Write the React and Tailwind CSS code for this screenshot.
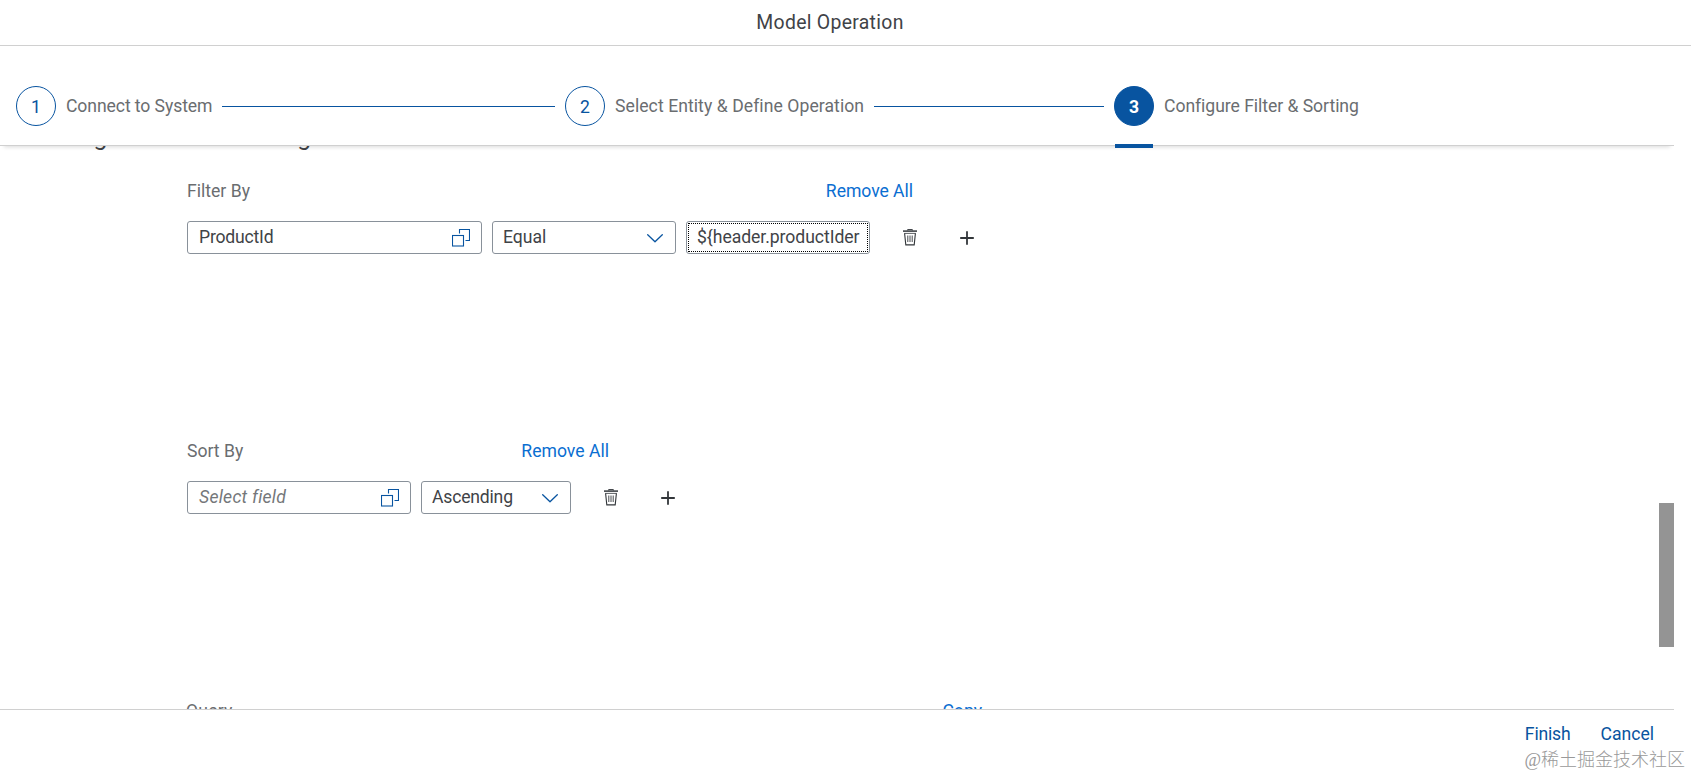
const ValueHelpIcon = () => (
  <svg
    className="h-[18px] w-[18px] flex-shrink-0"
    viewBox="0 0 18 18"
    fill="none"
    stroke="#0854a0"
    strokeWidth="1.1"
  >
    <rect x="0.5" y="6.5" width="11" height="10.5" />
    <path d="M7.5 4.5V0.5H17.5V11.5H13.5" />
  </svg>
);

const ChevronIcon = () => (
  <svg
    className="mt-[2px] h-[9px] w-4 flex-shrink-0"
    viewBox="0 0 16 9"
    fill="none"
    stroke="#0854a0"
    strokeWidth="1.3"
    strokeLinecap="round"
    strokeLinejoin="round"
  >
    <path d="M0.7 0.7L8 7.8L15.3 0.7" />
  </svg>
);

const TrashIcon = () => (
  <svg
    className="h-[17px] w-[14px]"
    viewBox="0 0 14 17"
    fill="none"
    stroke="#32363a"
  >
    <path d="M0 2.1H14" strokeWidth="1.5" />
    <path d="M4.6 1.4V0.6H9.4V1.4" strokeWidth="1" />
    <path d="M1.2 4.4H12.8" strokeWidth="0.8" />
    <path d="M1.6 4.4L2.8 15.9H11.2L12.4 4.4" strokeWidth="1.1" />
    <path d="M4.8 6.5V13M7 6.5V13M9.2 6.5V13" strokeWidth="0.9" />
  </svg>
);

const PlusIcon = () => (
  <svg
    className="h-[14px] w-[14px]"
    viewBox="0 0 14 14"
    fill="none"
    stroke="#32363a"
    strokeWidth="1.8"
  >
    <path d="M7 0.2V13.8M0.2 7H13.8" />
  </svg>
);

const RowActions = () => (
  <>
    <button className="ml-[33px] flex h-[33px] w-[14px] items-center justify-center">
      <TrashIcon />
    </button>
    <button className="ml-[43px] flex h-[33px] w-[14px] items-center justify-center">
      <PlusIcon />
    </button>
  </>
);

const Step = ({ number, active, children }) => (
  <>
    <span
      className={`flex h-10 w-10 flex-shrink-0 items-center justify-center rounded-full border border-[#0854a0] pt-px ${active ? "bg-[#0854a0] font-bold text-white" : "bg-white text-[#0854a0]"}`}
    >
      {number}
    </span>
    <span className="ml-[10px] whitespace-nowrap text-[#6a6d70]">
      {children}
    </span>
  </>
);

const App = () => {
  return (
    <div className="flex h-[776px] w-[1691px] flex-col overflow-hidden bg-white font-['Roboto',sans-serif] text-[17.6px] leading-[22px] text-[#3f4347]">
      {/* Dialog title */}
      <header className="flex h-[46px] w-full flex-shrink-0 items-center border-b border-[#d0d0d0]">
        <h1 className="w-[1660px] text-center text-[19.4px] tracking-[0.3px]">
          Model Operation
        </h1>
      </header>

      {/* Wizard progress */}
      <nav className="z-10 flex h-[100px] w-[1674px] flex-shrink-0 border-b border-[#d0d0d0] bg-white pl-4 pt-10 shadow-[0_5px_4px_-4px_rgba(0,0,0,0.15)]">
        <div className="flex h-10 w-[549px] items-center tracking-[-0.09px]">
          <Step number={1}>Connect to System</Step>
          <span className="ml-[10px] mr-[10px] h-px flex-1 bg-[#0854a0]" />
        </div>
        <div className="flex h-10 w-[549px] items-center tracking-[0.06px]">
          <Step number={2}>Select Entity &amp; Define Operation</Step>
          <span className="ml-[10px] mr-[10px] h-px flex-1 bg-[#0854a0]" />
        </div>
        <div className="relative flex h-10 items-center tracking-[-0.05px]">
          <Step number={3} active>
            Configure Filter &amp; Sorting
          </Step>
          <span className="absolute left-px top-[58px] h-1 w-[38px] bg-[#0854a0]" />
        </div>
      </nav>

      {/* Scrolled step content */}
      <main className="flex h-[563px] w-[1674px] flex-shrink-0 justify-between overflow-hidden">
        <div>
          <h2 className="-mt-[25px] mb-[29px] h-[30px] pl-[35px] text-[24.6px] leading-[32px] tracking-[0.07px]">
            Configure Filter &amp; Sorting
          </h2>
          <section className="h-[260px] pl-[187px]">
            <div className="flex w-[726px] justify-between">
              <span className="text-[#6a6d70]">Filter By</span>
              <a className="text-[#0a6ed1] tracking-[-0.05px]">Remove All</a>
            </div>
            <div className="mt-[19px] flex">
              <div className="flex h-[33px] w-[295px] items-center justify-between rounded-[3px] border border-[#89919a] pl-[11px] pr-[11px]">
                <span className="pb-px tracking-[-0.2px]">ProductId</span>
                <ValueHelpIcon />
              </div>
              <div className="ml-[10px] flex h-[33px] w-[184px] items-center justify-between rounded-[3px] border border-[#89919a] pl-[10px] pr-3">
                <span className="pb-px">Equal</span>
                <ChevronIcon />
              </div>
              <div className="ml-[10px] h-[33px] w-[184px] rounded-[3px] border border-[#89919a] p-px">
                <div className="flex h-full items-center overflow-hidden border border-dotted border-black pb-px pl-2 tracking-[-0.05px]">
                  {"${header.productIder"}
                </div>
              </div>
              <RowActions />
            </div>
          </section>
          <section className="h-[260px] pl-[187px]">
            <div className="flex w-[422px] justify-between">
              <span className="text-[#6a6d70]">Sort By</span>
              <a className="text-[#0a6ed1]">Remove All</a>
            </div>
            <div className="mt-[19px] flex">
              <div className="flex h-[33px] w-[224px] items-center justify-between rounded-[3px] border border-[#89919a] pl-[11px] pr-[11px]">
                <span className="pb-px italic tracking-[0.25px] text-[#74777a]">
                  Select field
                </span>
                <ValueHelpIcon />
              </div>
              <div className="ml-[10px] flex h-[33px] w-[150px] items-center justify-between rounded-[3px] border border-[#89919a] pl-[10px] pr-3">
                <span className="pb-px tracking-[-0.2px]">Ascending</span>
                <ChevronIcon />
              </div>
              <RowActions />
            </div>
          </section>
          <div className="flex w-[982px] justify-between pl-[186px]">
            <span className="tracking-[0.2px] text-[#6a6d70]">Query</span>
            <a className="text-[#0a6ed1]">Copy</a>
          </div>
        </div>
        <div className="mt-[357px] h-[144px] w-[15px] bg-[#949494]" />
      </main>

      <footer className="flex h-[67px] flex-shrink-0 flex-col">
        <div className="flex h-[40px] w-[1674px] justify-end gap-[30px] border-t border-[#d0d0d0] pr-5 pt-[13px] text-[#0854a0]">
          <button className="h-[22px] tracking-[-0.2px]">Finish</button>
          <button className="h-[22px]">Cancel</button>
        </div>
        <div className="flex justify-end whitespace-nowrap pr-[6px] font-['Liberation_Serif','Noto_Sans_CJK_SC',serif] text-[18px] font-light text-[#999999]">
          @稀土掘金技术社区
        </div>
      </footer>
    </div>
  );
};

export default App;
